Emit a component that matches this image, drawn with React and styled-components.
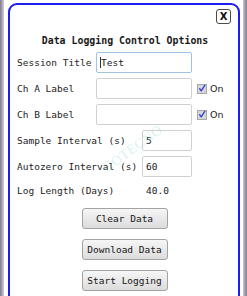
import React from "react";
import styled, { createGlobalStyle } from "styled-components";

const Global = createGlobalStyle`
  html, body { margin: 0; padding: 0; background: #fff; }
  body { width: 247px; height: 296px; overflow: hidden; font-family: "DejaVu Sans Mono", monospace; }
`;

const Page = styled.div`
  display: flex;
  width: 247px;
  height: 296px;
  overflow: hidden;
`;

const Strip = styled.div`
  flex: 0 0 ${(p) => p.$w}px;
  background: linear-gradient(to right, #7d7690, #a9a3b6 50%, #d2cfda);
  ${(p) => p.$right && "background: linear-gradient(to right, #cfcbd8, #9d97ab 50%, #8a8499);"}
`;

const Gap = styled.div`
  flex: 0 0 ${(p) => p.$w}px;
`;

const Dialog = styled.div`
  position: relative;
  flex: 0 0 232px;
  box-sizing: border-box;
  margin-top: 3px;
  height: 320px;
  border: 2px solid #1c1cf5;
  border-radius: 9px;
  background: #fff;
  display: flex;
  flex-direction: column;
  padding: 4px 7px 0 7px;
  color: #1e1e1e;
`;

const CloseRow = styled.div`
  display: flex;
  justify-content: flex-end;
`;

const CloseButton = styled.button`
  width: 15px;
  height: 15px;
  box-sizing: border-box;
  padding: 0;
  border: 1.5px solid #4a4a4a;
  border-radius: 3px;
  background: #fff;
  font-family: "DejaVu Sans", sans-serif;
  font-weight: bold;
  font-size: 10px;
  line-height: 12px;
  color: #111;
  display: flex;
  align-items: center;
  justify-content: center;
`;

const Title = styled.div`
  margin-top: 11px;
  font-size: 9.9px;
  line-height: 12px;
  font-weight: bold;
  text-align: center;
  padding-left: 2px;
  color: #1a1a1a;
`;

const Form = styled.div`
  margin-top: 5px;
  display: flex;
  flex-direction: column;
  gap: 5px;
`;

const Row = styled.div`
  display: grid;
  grid-template-columns: ${(p) => p.$label}px ${(p) => p.$input}px auto;
  align-items: center;
  height: ${(p) => p.$h || 21}px;
`;

const Label = styled.span`
  font-size: 9.5px;
  white-space: nowrap;
  color: #232323;
`;

const Input = styled.div`
  box-sizing: border-box;
  height: 21px;
  border: 1px solid ${(p) => (p.$focus ? "#9fc3e6" : "#d0d0d0")};
  border-radius: 2px;
  background: #fff;
  font-size: 9.5px;
  line-height: 19px;
  padding-left: 3px;
  color: #1a1a1a;
  display: flex;
  align-items: center;
`;

const Caret = styled.span`
  display: inline-block;
  width: 1px;
  height: 11px;
  background: #333;
`;

const Value = styled.span`
  font-size: 9.5px;
  padding-left: 4px;
  color: #232323;
`;

const Check = styled.label`
  display: flex;
  align-items: center;
  gap: 3px;
  margin-left: 5px;
  font-family: "DejaVu Sans", sans-serif;
  font-size: 9.5px;
  color: #222;
`;

const Box = styled.span`
  width: 10px;
  height: 10px;
  box-sizing: border-box;
  border: 1px solid #a8a8a8;
  background: #d6d6d6;
  display: flex;
  align-items: center;
  justify-content: center;
`;

const Buttons = styled.div`
  margin-top: 9px;
  display: flex;
  flex-direction: column;
  align-items: center;
  gap: 10px;
  padding-left: 1px;
`;

const Button = styled.button`
  width: 86px;
  height: 21px;
  box-sizing: border-box;
  border: 1px solid #a3a3a3;
  border-radius: 3px;
  background: linear-gradient(#f6f6f6, #dcdcdc);
  font-family: "DejaVu Sans Mono", monospace;
  font-size: 9.5px;
  color: #151515;
  padding: 0;
`;

const Watermark = styled.div`
  position: absolute;
  left: 88px;
  top: 136px;
  transform: rotate(-36deg);
  font-family: "Liberation Serif", serif;
  font-size: 14px;
  letter-spacing: 0.5px;
  color: rgba(120, 210, 200, 0.3);
  pointer-events: none;
`;

function CheckMark() {
  return (
    <svg width="9" height="9" viewBox="0 0 10 10">
      <path d="M2 5.2 L4 8 L8.5 1" fill="none" stroke="#2a3fd8" strokeWidth="1.6" strokeLinecap="round" strokeLinejoin="round" />
    </svg>
  );
}

export default function App() {
  return (
    <>
      <Global />
      <Page>
        <Strip $w={4} />
        <Gap $w={4} />
        <Dialog>
          <CloseRow>
            <CloseButton>X</CloseButton>
          </CloseRow>
          <Title>Data Logging Control Options</Title>
          <Form>
            <Row $label={79} $input={96}>
              <Label>Session Title</Label>
              <Input $focus>
                <Caret />
                Test
              </Input>
            </Row>
            <Row $label={79} $input={96}>
              <Label>Ch A Label</Label>
              <Input />
              <Check>
                <Box>
                  <CheckMark />
                </Box>
                On
              </Check>
            </Row>
            <Row $label={79} $input={96}>
              <Label>Ch B Label</Label>
              <Input />
              <Check>
                <Box>
                  <CheckMark />
                </Box>
                On
              </Check>
            </Row>
            <Row $label={125} $input={50}>
              <Label>Sample Interval (s)</Label>
              <Input>5</Input>
            </Row>
            <Row $label={125} $input={50}>
              <Label>Autozero Interval (s)</Label>
              <Input>60</Input>
            </Row>
            <Row $label={125} $input={50} $h={17}>
              <Label>Log Length (Days)</Label>
              <Value>40.0</Value>
            </Row>
          </Form>
          <Buttons>
            <Button>Clear Data</Button>
            <Button>Download Data</Button>
            <Button>Start Logging</Button>
          </Buttons>
          <Watermark>COTECNO</Watermark>
        </Dialog>
        <Gap $w={3} />
        <Strip $w={4} $right />
      </Page>
    </>
  );
}
